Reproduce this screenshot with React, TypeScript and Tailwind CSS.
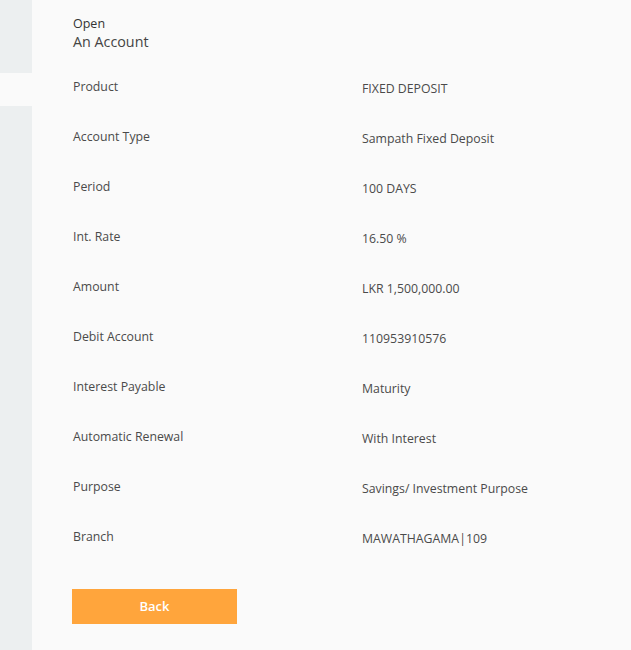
import React from 'react';

const rows: [string, string][] = [
  ['Product', 'FIXED DEPOSIT'],
  ['Account Type', 'Sampath Fixed Deposit'],
  ['Period', '100 DAYS'],
  ['Int. Rate', '16.50 %'],
  ['Amount', 'LKR 1,500,000.00'],
  ['Debit Account', '110953910576'],
  ['Interest Payable', 'Maturity'],
  ['Automatic Renewal', 'With Interest'],
  ['Purpose', 'Savings/ Investment Purpose'],
  ['Branch', 'MAWATHAGAMA|109'],
];

export default function App() {
  return (
    <div className="flex min-h-[650px] w-full bg-[#fafafa] text-[#4a4a4a] font-['Open_Sans',sans-serif]">
      {/* side rail */}
      <div className="flex w-[32px] shrink-0 flex-col">
        <div className="h-[73px] bg-[#eceff0]" />
        <div className="h-[33px] bg-[#fafafa]" />
        <div className="flex-1 bg-[#eceff0]" />
      </div>

      <div className="flex flex-1 flex-col pl-[41px] pt-[15px]">
        <div className="text-[12.5px] leading-[18px] font-medium text-[#333]">Open</div>
        <div className="text-[14.3px] leading-[18px] text-[#444]">An Account</div>

        <div className="mt-[27px] flex flex-col">
          {rows.map(([label, value]) => (
            <div key={label} className="flex h-[50px] text-[12.3px] leading-[18px]">
              <div className="w-[289px] shrink-0">{label}</div>
              <div className="pt-[2px]">{value}</div>
            </div>
          ))}
        </div>

        <button className="-ml-px mt-[11px] h-[35px] w-[165px] bg-[#ffa53c] text-[13px] font-semibold text-white">
          Back
        </button>
      </div>
    </div>
  );
}
